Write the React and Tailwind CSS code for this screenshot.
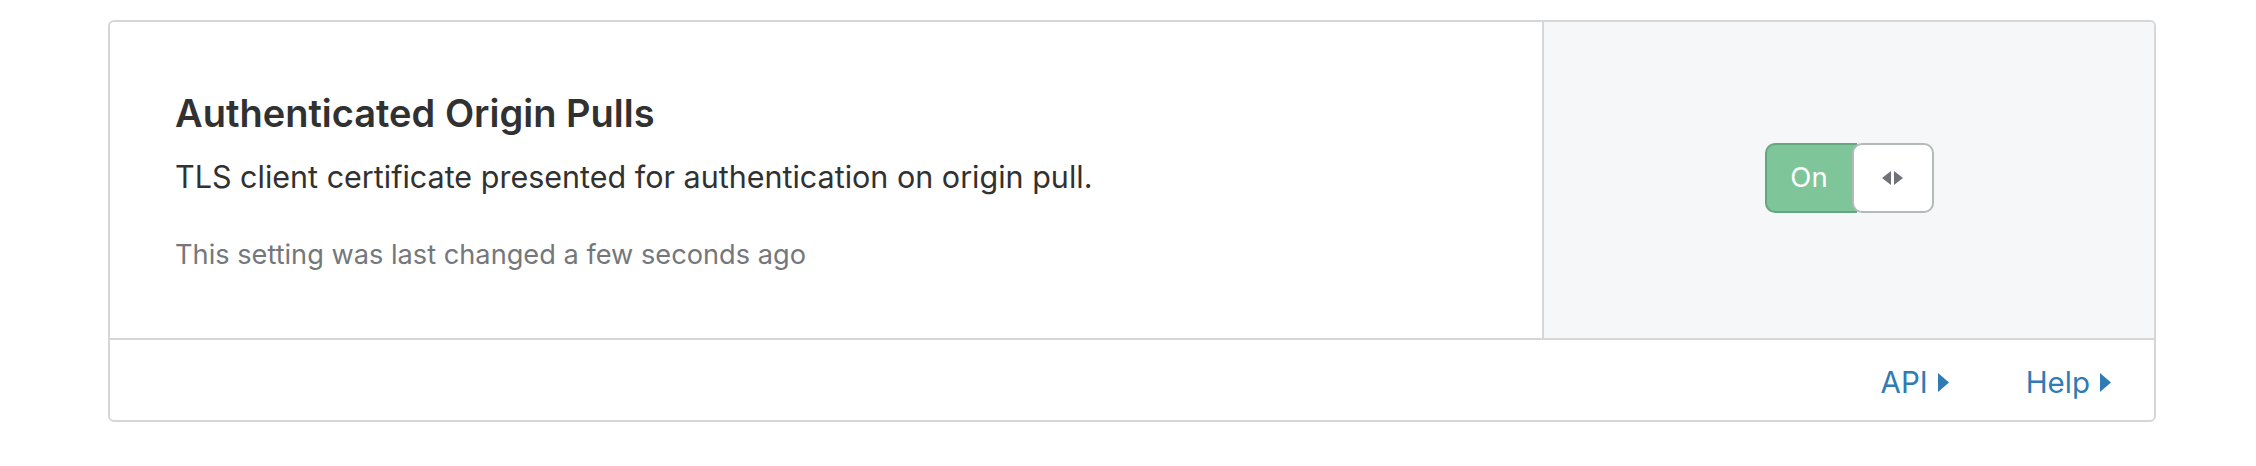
import React from 'react';

function Caret({ className }) {
    return (
        <svg className={className} width="11" height="19" viewBox="0 0 11 19" fill="currentColor">
            <path d="M0 0 L11 9.5 L0 19 Z" />
        </svg>
    );
}

function Toggle() {
    return (
        <div className="flex h-[70px] w-[169px]">
            <div className="flex w-[92px] items-center justify-center rounded-l-[10px] border-2 border-r-0 border-[#64a67d] bg-[#7ec699] pr-[5px] text-[27.5px] text-white">
                On
            </div>
            <div className="-ml-[5px] flex flex-1 items-center justify-center gap-[3px] rounded-[10px] border-2 border-[#b6b9bc] bg-white">
                <svg width="9" height="14" viewBox="0 0 9 14" fill="#6f7378">
                    <path d="M9 0 L0 7 L9 14 Z" />
                </svg>
                <svg width="9" height="14" viewBox="0 0 9 14" fill="#6f7378">
                    <path d="M0 0 L9 7 L0 14 Z" />
                </svg>
            </div>
        </div>
    );
}

export default function App() {
    return (
        <div className="min-h-screen bg-white pt-[20px] pl-[108px] font-['Inter',sans-serif]">
            <div className="w-[2048px] rounded-[6px] border-2 border-[#d6d6d6] bg-white">
                {/* Setting body */}
                <div className="flex border-b-2 border-[#d6d6d6]">
                    <div className="flex-1 pt-[69px] pb-[64px] pl-[65px]">
                        <h2 className="text-[38px] leading-[44px] font-semibold text-[#313131]">Authenticated Origin Pulls</h2>
                        <p className="mt-[22px] text-[30.5px] leading-[40px] text-[#313131]">
                            TLS client certificate presented for authentication on origin pull.
                        </p>
                        <p className="mt-[39px] text-[27.2px] leading-[38px] text-[#74777b]">
                            This setting was last changed a few seconds ago
                        </p>
                    </div>
                    <div className="flex w-[612px] items-center justify-center rounded-tr-[4px] border-l-2 border-[#d6d6d6] bg-[#f6f7f8] pb-[4px]">
                        <Toggle />
                    </div>
                </div>

                {/* Footer links */}
                <div className="flex h-[80px] items-center justify-end gap-[77px] pt-[4px] pr-[43px] text-[29.5px] text-[#2f7bb4]">
                    <a className="flex items-center gap-[10px]">
                        API
                        <Caret />
                    </a>
                    <a className="flex items-center gap-[10px]">
                        Help
                        <Caret />
                    </a>
                </div>
            </div>
        </div>
    );
}
